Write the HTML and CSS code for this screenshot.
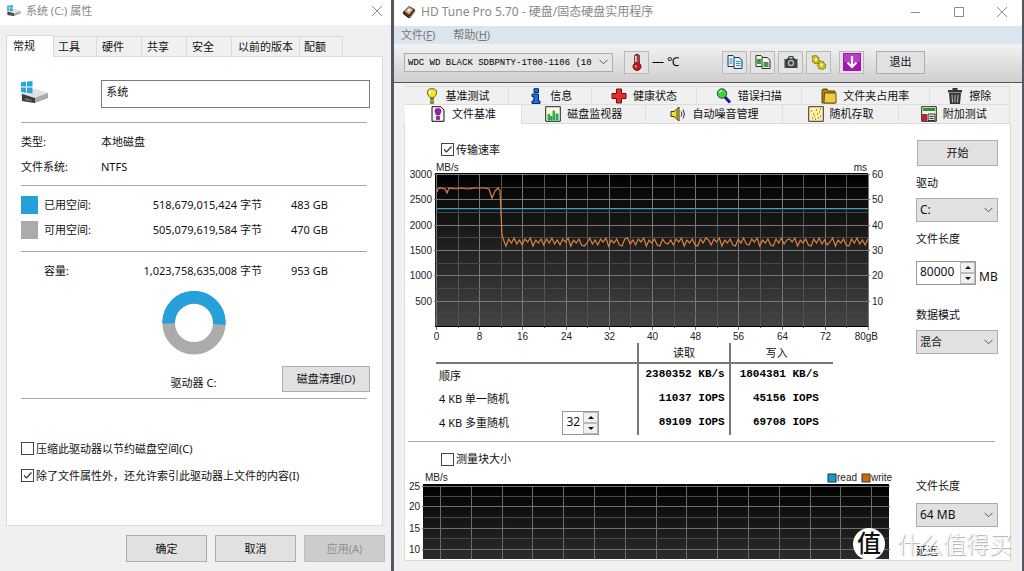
FILE: index.html
```html
<!DOCTYPE html>
<html lang="zh-CN">
<head>
<meta charset="utf-8">
<title>HD Tune Pro</title>
<link rel="stylesheet" href="styles.css">
</head>
<body>
<main class="desktop">

<section class="props">
  <header class="titlebar props-title">
    <svg class="title-icon" viewBox="0 0 28 22"><use href="#drive"/></svg>
    <h1>系统 (C:) 属性</h1>
    <button class="winbtn" aria-label="关闭"><svg viewBox="0 0 12 12"><path d="M1 1l10 10M11 1L1 11"/></svg></button>
  </header>
  <nav class="ptabs">
    <button class="ptab on">常规</button><button class="ptab next">工具</button><button class="ptab">硬件</button><button class="ptab">共享</button><button class="ptab">安全</button><button class="ptab wide">以前的版本</button><button class="ptab">配额</button>
  </nav>
  <div class="ppanel">
    <div class="namerow">
      <svg class="drive" viewBox="0 0 28 22">
        <g id="drive">
          <path d="M0 13l13-5 14 4v5l-14 5L1 20z" fill="#c9c9cb"/>
          <path d="M0 13l13-5 14 4-13 5z" fill="#e2e2e4"/>
          <path d="M1 13l13 4v5L1 20z" fill="#3a3c3e"/>
          <path d="M14 17l13-5v5l-13 5z" fill="#a9aaad"/>
          <path d="M4 17l7 2v1l-7-1z" fill="#777"/>
          <path d="M0 1.300l5-.7v5H0zM6 .5L11.500 0v5.600H6zM0 6.500h5v5.200l-5-.6zM6 6.500h5.500v6L6 11.800z" fill="#25a9dd"/>
        </g>
      </svg>
      <input class="namebox" aria-label="卷标" value="系统">
    </div>
    <hr>
    <dl class="facts">
      <dt>类型:</dt><dd>本地磁盘</dd>
      <dt>文件系统:</dt><dd>NTFS</dd>
    </dl>
    <hr>
    <table class="usage">
      <tr><td class="sw"><span class="swatch used"></span></td><th>已用空间:</th><td class="num">518,679,015,424 字节</td><td class="gb">483 GB</td></tr>
      <tr><td class="sw"><span class="swatch free"></span></td><th>可用空间:</th><td class="num">505,079,619,584 字节</td><td class="gb">470 GB</td></tr>
    </table>
    <hr>
    <table class="usage total">
      <tr><td class="sw"></td><th>容量:</th><td class="num">1,023,758,635,008 字节</td><td class="gb">953 GB</td></tr>
    </table>
    <div class="donutrow">
      <figure class="donut">
        <svg viewBox="0 0 64 64"><circle cx="32" cy="32" r="25.300" fill="none" stroke="#ababab" stroke-width="12.600"/><path d="M6.700 32.400A25.300 25.300 0 1 1 57.200 33.500" fill="none" stroke="#26a0da" stroke-width="12.600"/></svg>
        <figcaption>驱动器 C:</figcaption>
      </figure>
      <button class="btn clean">磁盘清理(D)</button>
    </div>
    <hr>
    <div class="pchecks">
      <label class="check"><input type="checkbox">压缩此驱动器以节约磁盘空间(C)</label>
      <label class="check"><input type="checkbox" checked>除了文件属性外，还允许索引此驱动器上文件的内容(I)</label>
    </div>
  </div>
  <footer class="pfoot">
    <button class="btn">确定</button><button class="btn">取消</button><button class="btn" disabled>应用(A)</button>
  </footer>
</section>

<section class="hd">
  <header class="titlebar hd-title">
    <svg class="hd-logo" viewBox="0 0 16 16"><path d="M1 8l7-7 7 4-6 9z" fill="#3b2a20"/><path d="M3 7l5-5 5 3-5 6z" fill="#d8a878"/><circle cx="8" cy="6" r="1.500" fill="#fff"/><path d="M1 8l8 6-1 1.500L1 10z" fill="#111"/><path d="M9 14l6-9v2L9 15.500z" fill="#76502f"/></svg>
    <h1>HD Tune Pro 5.70 - 硬盘/固态硬盘实用程序</h1>
    <div class="winbtns">
      <button class="winbtn" aria-label="最小化"><svg viewBox="0 0 12 12"><path d="M1 6.500h9"/></svg></button>
      <button class="winbtn" aria-label="最大化"><svg viewBox="0 0 12 12"><path d="M1.500 1.500h9v9h-9z"/></svg></button>
      <button class="winbtn" aria-label="关闭"><svg viewBox="0 0 12 12"><path d="M1 1l10 10M11 1L1 11"/></svg></button>
    </div>
  </header>
  <nav class="menu"><button>文件(<u>F</u>)</button><button>帮助(<u>H</u>)</button></nav>
  <div class="toolbar">
    <select class="combo drivebox" aria-label="驱动器"><option>WDC WD BLACK SDBPNTY-1T00-1106 (10</option></select>
    <button class="tool" aria-label="温度"><svg class="big" viewBox="0 0 16 16"><path d="M6 2q2-2 4 0v7q2 1.500 1.500 4-1 2.500-3.500 2.500T4.500 13Q4 10.500 6 9z" fill="#c11818" stroke="#4d1111" stroke-width=".8"/><path d="M7 2.500v5.500" stroke="#fff" stroke-width="1.200"/><path d="M9 2v6" stroke="#777"/><circle cx="7" cy="12" r="1.300" fill="#f06060"/></svg></button>
    <span class="temp">— ℃</span>
    <div class="tools">
      <button class="tool" aria-label="复制文本"><svg viewBox="0 0 16 16"><g fill="#dff1ff" stroke="#23384e"><path d="M1 1.500h5l2.500 2.500v8.500H1z"/><path d="M7 3.500h5l3 2.500v8.500H7z"/></g><path d="M2.500 5h3M2.500 7h3M2.500 9h3M9 7.500h4.500M9 9.500h4.500M9 11.500h4.500" stroke="#3492cf"/></svg></button>
      <button class="tool" aria-label="复制图像"><svg viewBox="0 0 16 16"><g fill="#eef8e8" stroke="#243b24"><path d="M1 1.500h5l2.500 2.500v8.500H1z"/><path d="M7 3.500h5l3 2.500v8.500H7z"/></g><path d="M2 5h4v5H2zM8.500 8h5v5h-5z" fill="#38a24a"/><path d="M3 6h2M10 9h2" stroke="#c33"/></svg></button>
      <button class="tool" aria-label="截图"><svg viewBox="0 0 16 16"><path d="M1.500 5H4l2-3h4l2 3h2.500v9h-13z" fill="#3d453f"/><path d="M6.500 3h3v1.500h-3z" fill="#c9d2c9"/><circle cx="8" cy="9" r="3.200" fill="#aebbae"/><circle cx="8" cy="9" r="1.800" fill="#353b37"/></svg></button>
      <button class="tool" aria-label="选项"><svg viewBox="0 0 16 16"><g fill="#d6c520" stroke="#756b0b" stroke-width=".8"><path d="M1 3l1.500-2 1 1.500L5 1l1 2 2 .5-.5 2L9 7 7.500 8 7 10 5 9 3.500 10 3 8 1 7.500 2 5.500z"/><path d="M7.500 8l2-1.500L10.500 8l2-.5.5 2 2 1-1 1.500.5 2-2 .5-1 1.500-1.500-1.500-2 .5-.5-2L6 11.500 7.500 10z"/></g><ellipse cx="5" cy="5.500" rx="1.100" ry="1.500" fill="#fff7b0"/><ellipse cx="10.500" cy="11" rx="1.200" ry="1.600" fill="#fff7b0"/></svg></button>
      <button class="tool save" aria-label="保存"><svg viewBox="0 0 18 18"><path d="M0 0h18v18H0z" fill="#a516b0"/><path d="M1 1h16v8H1z" fill="#bd3cc7"/><path d="M9 3v10M4.500 9.500L9 14l4.500-4.500" fill="none" stroke="#fff" stroke-width="2.200"/></svg></button>
      <button class="btn exit">退出</button>
    </div>
  </div>
  <div class="work">
    <nav class="htabs">
      <div class="hrow">
        <button class="htab w104"><svg viewBox="0 0 16 16"><path d="M8 .7q5 0 4.500 4.300Q12 8 10 9.500H6Q4 8 3.500 5 3 .7 8 .7z" fill="#f1e630" stroke="#67600b"/><path d="M6 2.500L5.500 6" stroke="#fff" stroke-width="1.500"/><path d="M6.500 10.500h3v1.500h-3zM6.500 13h3v2.500h-3z" fill="#b4a919" stroke="#4f4a0a" stroke-width=".6"/></svg>基准测试</button>
        <button class="htab w83"><svg viewBox="0 0 16 16"><path d="M6 .7h4.500v3.800H6zM4 6h6.500v7H12v2.500H4V13h1.800V8.500H4z" fill="#1672e0" stroke="#06255e"/></svg>信息</button>
        <button class="htab w104"><svg viewBox="0 0 16 16"><path d="M5.500 1h5v4.500H15v5h-4.500V15h-5v-4.500H1v-5h4.500z" fill="#e62b2b" stroke="#7d0d0d"/></svg>健康状态</button>
        <button class="htab w105"><svg viewBox="0 0 16 16"><path d="M8.500 8.500l5.500 6" stroke="#181898" stroke-width="3"/><circle cx="6" cy="5.500" r="4.700" fill="#3fd046" stroke="#17581b"/><path d="M3.500 4.500Q4 3 6 2.700" fill="none" stroke="#d7ffd7" stroke-width="1.300"/></svg>错误扫描</button>
        <button class="htab w128"><svg viewBox="0 0 16 16"><path d="M1 3V2l1-1h4l1.500 2H14v12H1z" fill="#a98210" stroke="#5e4703"/><path d="M3.500 5H15v10H3z" fill="#f0cb43" stroke="#6b5005"/></svg>文件夹占用率</button>
        <button class="htab w80"><svg viewBox="0 0 16 16"><path d="M5.500 0h5v2H15v2.500H1V2h4.500zM2 5h12l-1 11H3z" fill="#353535"/><path d="M5 6.500l.5 8M8 6.500v8M11 6.500l-.5 8" stroke="#bbb"/></svg>擦除</button>
      </div>
      <div class="hrow second">
        <button class="htab w117 on"><svg viewBox="0 0 16 16"><path d="M2 .7h9L14 4v11.300H2z" fill="#f5eff5" stroke="#111"/><path d="M8 2.500q3.500 0 3 3L9.500 9h-3L5 5.500q-.5-3 3-3zM6.500 10.500h3v3h-3z" fill="#a31bb4" stroke="#510f5a" stroke-width=".6"/></svg>文件基准</button>
        <button class="htab w124"><svg viewBox="0 0 16 16"><path d="M.7.7h14.600v14.600H.7z" fill="#fafbe0" stroke="#222"/><path d="M2.500 8h2.500v6.500H2.500zM7.500 4.500H10v10H7.500z" fill="#28b633"/><path d="M5 10h2.500v4.500H5zM10.500 7.500h3v7h-3z" fill="#2da07a"/></svg>磁盘监视器</button>
        <button class="htab w137"><svg viewBox="0 0 16 16"><path d="M1 5.500h3l5-4.500v14L4 10.500H1z" fill="#f0e03a" stroke="#3c3509"/><path d="M7 3v10" stroke="#9f9214" stroke-width="2"/><path d="M11 5.500q2 2.500 0 5M13 3.500q3 4.500 0 9" fill="none" stroke="#333"/></svg>自动噪音管理</button>
        <button class="htab w115"><svg viewBox="0 0 16 16"><path d="M.7.7h14.600v14.600H.7z" fill="#fbf1ab" stroke="#333"/><path d="M3 5h1M6 10h1M8 4h1M11 6h1M12 3h1M4 12h1M10 12h1M9 8h1M12 10h1M5 8h1M7 13h1" stroke="#ad7613" stroke-width="1.300"/></svg>随机存取</button>
        <button class="htab w111"><svg viewBox="0 0 16 16"><path d="M.7.7h14.600v14.600H.7z" fill="#f6f8e8" stroke="#222"/><path d="M2 2h12v3H2z" fill="#318e3b"/><path d="M1 8h5v7H1z" fill="#be2532"/><path d="M7 8h7v6.500H7z" fill="#ddd" stroke="#333"/><path d="M8.500 10.500h4M8.500 12.500h4" stroke="#444"/></svg>附加测试</button>
      </div>
    </nav>
    <div class="hpanel">
      <div class="split upper">
        <div class="mainside">
          <label class="check"><input type="checkbox" checked>传输速率</label>
          <svg class="chart" id="rate" viewBox="405 159 490 184" role="img" aria-label="传输速率"></svg>
          <table class="results">
            <thead><tr><th class="c1"></th><th class="c2">读取</th><th class="c3">写入</th></tr></thead>
            <tbody>
              <tr><th>顺序</th><td>2380352 KB/s</td><td>1804381 KB/s</td></tr>
              <tr><th>4 KB 单一随机</th><td>11037 IOPS</td><td>45156 IOPS</td></tr>
              <tr><th><div class="depth"><label for="qd">4 KB 多重随机</label><span class="spin small"><input id="qd" value="32"><span class="arrows"><button aria-label="增加"></button><button aria-label="减少" class="down"></button></span></span></div></th><td>89109 IOPS</td><td>69708 IOPS</td></tr>
            </tbody>
          </table>
        </div>
        <div class="side">
          <button class="btn start">开始</button>
          <label for="drv">驱动</label>
          <select class="combo" id="drv"><option>C:</option></select>
          <label for="len" class="mid">文件长度</label>
          <div class="lenrow"><span class="spin"><input id="len" value="80000"><span class="arrows"><button aria-label="增加"></button><button aria-label="减少" class="down"></button></span></span><span class="unit">MB</span></div>
          <label for="mode" class="low">数据模式</label>
          <select class="combo" id="mode"><option>混合</option></select>
        </div>
      </div>
      <hr>
      <div class="split lower">
        <div class="mainside">
          <label class="check"><input type="checkbox">测量块大小</label>
          <svg class="chart" id="block" viewBox="405 468 490 91" role="img" aria-label="测量块大小"></svg>
        </div>
        <div class="side">
          <label for="len2">文件长度</label>
          <select class="combo" id="len2"><option>64 MB</option></select>
          <span class="delay">延迟</span>
        </div>
      </div>
    </div>
  </div>
</section>
<div class="mark"><span class="seal">值</span><span class="brand">什么值得买</span></div>
</main>
<script src="charts.js"></script>
</body>
</html>
```

FILE: styles.css
```css
* { box-sizing: border-box; }
body {
  margin: 0;
  background: #f0f0f0;
  color: #111;
  font: 11px/18px "Noto Sans", "Noto Sans CJK SC", sans-serif;
}
button, input, select { font: inherit; color: inherit; }
button { padding: 0; border: 0; background: none; }
h1 { margin: 0; font-size: 11px; font-weight: 400; color: #888; white-space: nowrap; }
hr { height: 1px; margin: 0; border: 0; background: #a8a8a8; }
.desktop {
  position: relative;
  display: grid;
  grid-template-columns: 391fr 633fr;
  min-height: 100vh;
  overflow: hidden;
}

.titlebar { display: flex; align-items: center; background: #fff; }
.winbtn { display: block; width: 12px; height: 12px; }
.winbtn svg { display: block; width: 12px; height: 12px; fill: none; stroke: #8c8c8c; }

.props { background: #f0f0f0; }
.props-title { height: 25px; padding: 0 8px 4px 7px; gap: 5px; }
.title-icon { width: 14px; height: 11px; }
.props-title .winbtn { margin-left: auto; }
.ptabs { display: flex; align-items: flex-end; height: 31px; padding-left: 6px; }
.ptab {
  width: 45px;
  height: 20px;
  padding-right: 12px;
  border: 1px solid #d9d9d9;
  border-width: 1px 1px 0 0;
  text-align: center;
}
.ptab.next { width: 43px; }
.ptab.wide { width: 68px; padding: 0; }
.ptab.on {
  width: 48px;
  height: 22px;
  margin-bottom: -1px;
  padding-bottom: 2px;
  border-left-width: 1px;
  background: #fff;
}
.ptab:last-child { width: 43px; }
.ppanel {
  margin: 0 8px 0 6px;
  padding: 23px 12px 36px 14px;
  border: 1px solid #dcdcdc;
  background: #fff;
}
.ppanel hr { margin-right: 3px; }
.namerow { display: flex; justify-content: space-between; margin-bottom: 14px; }
.drive { width: 28px; height: 22px; margin-top: 1px; }
.namebox { width: 77%; height: 28px; padding: 0 4px 6px; border: 1px solid #7a7a7a; background: #fff; }
.facts { display: grid; grid-template-columns: 80px 1fr; margin: 6px 0; line-height: 25px; }
.facts dd { margin: 0; }
.usage { width: 100%; margin: 6px 0 9px; border-collapse: collapse; line-height: 25px; }
.usage td, .usage th { padding: 0; font-weight: 400; text-align: left; }
.usage .sw { width: 23px; }
.usage .num { text-align: right; }
.usage .gb { width: 108px; padding-left: 29px; }
.usage.total { margin: 6px 0 8px; }
.swatch { display: block; width: 17px; height: 18px; }
.used { background: #26a0da; }
.free { background: #ababab; }
.donutrow { display: grid; grid-template-columns: 1fr auto 1fr; align-items: end; padding-bottom: 6px; }
.donut { grid-column: 2; margin: 0; padding-right: 4px; text-align: center; }
.donut svg { display: block; width: 64px; height: 64px; }
.donut figcaption { padding-top: 19px; }
.btn { border: 1px solid #adadad; background: #e1e1e1; text-align: center; }
.clean { justify-self: end; width: 88px; height: 26px; }
.pchecks { display: grid; padding-top: 36px; }
.check { display: flex; align-items: center; gap: 2px; }
.pchecks .check { height: 27px; }
.check input {
  appearance: none;
  flex: none;
  width: 13px;
  height: 13px;
  margin: 0;
  border: 1px solid #444;
  background: #fff;
}
.check input:checked {
  background: #fff url("data:image/svg+xml,%3Csvg xmlns='http://www.w3.org/2000/svg' viewBox='0 0 11 11'%3E%3Cpath d='M2 5.500L4.500 8 9.500 2.500' fill='none' stroke='%23333' stroke-width='1.200'/%3E%3C/svg%3E") center / 11px;
}
.pfoot { display: flex; justify-content: flex-end; gap: 8px; padding: 9px 6px; }
.pfoot .btn { width: 81px; height: 27px; }
.pfoot .btn:disabled { border-color: #bfbfbf; background: #ccc; color: #8f8f8f; }

.hd { border: solid #555563; border-width: 0 2px 0 3px; background: #f0f0f0; }
.hd-title { height: 26px; padding: 0 14px 3px 8px; gap: 5px; }
.hd-title h1 { font-size: 12px; }
.hd-logo { width: 14px; height: 14px; }
.winbtns { display: flex; gap: 31px; margin-left: auto; }
.menu { display: flex; gap: 18px; height: 18px; padding-left: 7px; background: #dce4ee; color: #777; }
.toolbar {
  display: flex;
  align-items: center;
  height: 39px;
  padding: 0 97px 2px 10px;
  border-bottom: 1px solid #555;
  background: linear-gradient(#f2f2f2, #cfcfcf);
}
.combo {
  appearance: none;
  width: 100%;
  height: 24px;
  padding: 0 18px 0 3px;
  border: 1px solid #adadad;
  border-radius: 0;
  background: #e1e1e1 url("data:image/svg+xml,%3Csvg xmlns='http://www.w3.org/2000/svg' viewBox='0 0 9 6'%3E%3Cpath d='M.5.8l4 4 4-4' fill='none' stroke='%23555'/%3E%3C/svg%3E") right 4px center / 9px 6px no-repeat;
}
.side .combo { font-size: 12px; }
#mode { font-size: 11px; }
.drivebox { width: 209px; height: 19px; background-color: #e6e6e6; font-family: "Liberation Mono", monospace; font-size: 9px; color: #000; }
.tool {
  display: grid;
  place-items: center;
  width: 25px;
  height: 23px;
  border: 1px solid #b9b9b9;
  background: #e4e4e4;
}
.tool svg { display: block; width: 16px; height: 16px; }
.tool .big, .save svg { width: 18px; height: 18px; }
.drivebox + .tool { margin-left: 11px; }
.temp { margin-left: 3px; font-size: 12px; color: #000; white-space: nowrap; }
.tools { display: flex; gap: 3px; margin-left: auto; }
.save { margin-left: 5px; }
.exit { width: 49px; height: 23px; margin-left: 9px; }
.work { padding: 3px 11px 10px 10px; }
.hrow { display: flex; padding: 0 1px; }
.htab {
  display: flex;
  align-items: center;
  justify-content: center;
  gap: 6px;
  height: 18px;
  border: 1px solid #dedede;
  border-width: 1px 1px 0 0;
  white-space: nowrap;
}
.htab svg { width: 16px; height: 16px; }
.second .htab { height: 19px; }
.second .htab.on { height: 20px; margin-bottom: -1px; padding-bottom: 2px; background: #fff; }
.w80 { flex: 80; } .w83 { flex: 83; } .w104 { flex: 104; } .w105 { flex: 105; }
.w111 { flex: 111; } .w115 { flex: 115; } .w117 { flex: 117; } .w124 { flex: 124; }
.w128 { flex: 128; } .w137 { flex: 137; }
.hpanel { border: 1px solid #dcdcdc; background: #fff; }
.hpanel > hr { margin: 0 15px 0 3px; }
.split { display: grid; grid-template-columns: 1fr 82px; gap: 21px; padding-right: 12px; }
.mainside > .check { width: max-content; margin-left: 36px; }
.upper { padding: 16px 12px 6px 0; }
.upper .mainside > .check { height: 19px; }
.lower .mainside > .check { height: 18px; margin-top: 8px; }
.chart { display: block; width: 100%; font: 10px "Liberation Sans", sans-serif; fill: #222; }
.results { width: 81%; margin-left: 31px; border-collapse: collapse; table-layout: fixed; }
.results th { height: 24px; padding: 0 0 0 3px; font-weight: 400; text-align: left; }
.results td { padding: 0 4px 3px 0; text-align: right; font: bold 11px/18px "Liberation Mono", monospace; color: #000; }
.results thead th { height: 20px; padding: 0; border-bottom: 2px solid #777; text-align: center; }
.results .c1 { width: 51%; }
.results .c2 { width: 23%; }
.results thead .c3 { padding-right: 10px; }
.results td, .results .c2, .results .c3 { border-left: 2px solid #777; }
.results td:last-child { padding-right: 14px; }
.depth { display: flex; align-items: center; justify-content: space-between; padding-right: 38px; }
.spin { display: flex; width: 60px; height: 24px; border: 1px solid #999; background: #fff; }
.spin input { flex: 1; min-width: 0; padding: 0 3px 2px; border: 0; background: #fff; font-size: 12px; }
.spin.small { width: 37px; }
.arrows { display: grid; width: 15px; background: #ddd; }
.arrows button { display: grid; place-items: center; border: 1px solid #bbb; background: #f0f0f0; }
.arrows button::before { content: ""; border: solid transparent; border-width: 0 3px 3px; border-bottom-color: #111; }
.arrows .down::before { border-width: 3px 3px 0; border-top-color: #111; }
.side { display: flex; flex-direction: column; }
.start { width: 81px; height: 26px; margin-bottom: 8px; align-self: flex-end; }
.side .combo { margin-top: 6px; }
.mid { margin-top: 8px; }
.lenrow { display: flex; gap: 3px; margin-top: 13px; }
.unit { padding-top: 7px; font-size: 12px; }
.low { margin-top: 20px; }
.lower .side { padding-top: 35px; }
.lower .side .combo { margin-top: 8px; }
.delay { margin-top: 15px; }
.mark { position: absolute; right: 12px; bottom: 11px; display: flex; align-items: center; gap: 12px; pointer-events: none; }
.seal { width: 32px; height: 32px; border-radius: 50%; background: #fff; font-size: 24px; line-height: 30px; font-weight: 500; text-align: center; color: #111; }
.brand { font-size: 23px; line-height: 32px; font-weight: 300; color: #fff; text-shadow: 1px 1px 1px #aaa, 0 0 1px #ccc; }
```

FILE: charts.js
```js
const el = (tag, attrs, text) => {
  const n = document.createElementNS('http://www.w3.org/2000/svg', tag);
  for (const k in attrs) n.setAttribute(k, attrs[k]);
  if (text !== undefined) n.textContent = text;
  return n;
};
const shade = (svg, id, end) => {
  const g = el('linearGradient', { id, x1: 0, y1: 0, x2: 0, y2: 1 });
  g.append(el('stop', { offset: 0, 'stop-color': '#000' }), el('stop', { offset: 1, 'stop-color': end }));
  svg.append(g);
};
const line = (svg, x1, y1, x2, y2, stroke) => svg.append(el('line', { x1, y1, x2, y2, stroke }));
const label = (svg, x, y, anchor, text) => svg.append(el('text', { x, y, 'text-anchor': anchor }, text));

const rate = document.getElementById('rate');
shade(rate, 'g1', '#444');
rate.append(el('rect', { x: 435, y: 173, width: 433, height: 154, fill: 'url(#g1)' }));
for (let i = 0; i <= 20; i++) {
  const x = Math.round(436 + i * 21.6) + 0.5;
  line(rate, x, 174, x, i % 2 ? 328 : 330, i % 2 ? '#555' : '#777');
  if (i % 2 === 0 && i < 20) label(rate, x, 340, 'middle', i * 4);
}
label(rate, 878, 340, 'end', '80gB');
for (let i = 0; i < 12; i++) {
  const y = Math.round(174 + i * 12.65) + 0.5;
  line(rate, i % 2 ? 436 : 434, y, i % 2 ? 868 : 870, y, i % 2 ? '#484848' : '#777');
  if (i % 2 === 0) {
    label(rate, 432, y + 3.5, 'end', 3000 - i * 250);
    label(rate, 872, y + 3.5, 'start', 60 - i * 5);
  }
}
line(rate, 435, 173.5, 868, 173.5, '#000');
line(rate, 435, 326.5, 868, 326.5, '#000');
label(rate, 436, 171, 'start', 'MB/s');
label(rate, 867, 171, 'end', 'ms');
line(rate, 437, 209.5, 868, 209.5, '#123f55');
line(rate, 437, 208.5, 868, 208.5, '#4f9ab8');
let d = 'M437 192L438 189 440 188 445 189 447 193 449 188 456 189 460 188 467 189 475 188 485 188 489 189 492 198 495 191 498 188 500 191 502 235 504 241';
const wave = [246, 239, 243, 238, 244, 240, 245, 239, 242, 238, 246, 240, 243, 239, 245];
for (let i = 0, x = 506; x < 868; i++, x += 2.7) d += ` ${x.toFixed(1)} ${wave[(i + Math.floor(i / 15)) % 15]}`;
rate.append(el('path', { d, fill: 'none', stroke: '#e08040', 'stroke-width': 1.2 }));

const block = document.getElementById('block');
shade(block, 'g2', '#2c2c2c');
block.append(el('rect', { x: 423, y: 484, width: 466, height: 75, fill: 'url(#g2)' }));
for (let i = 0; i < 15; i++) {
  const x = Math.round(440 + i * 30.8) + 0.5;
  line(block, x, 486, x, 559, '#6b6b6b');
}
[486.5, 506.5, 528.5, 549.5].forEach((y, i) => {
  line(block, 422, y, 890, y, '#707070');
  label(block, 420, y + 3.5, 'end', 25 - i * 5);
});
[496.5, 517.5, 538.5].forEach(y => line(block, 424, y, 889, y, '#484848'));
label(block, 425, 481, 'start', 'MB/s');
block.append(el('rect', { x: 828, y: 474, width: 8, height: 8, fill: '#169bd0', stroke: '#234' }));
label(block, 837, 481, 'start', 'read');
block.append(el('rect', { x: 862, y: 474, width: 8, height: 8, fill: '#c86a10', stroke: '#532' }));
label(block, 871, 481, 'start', 'write');
```
